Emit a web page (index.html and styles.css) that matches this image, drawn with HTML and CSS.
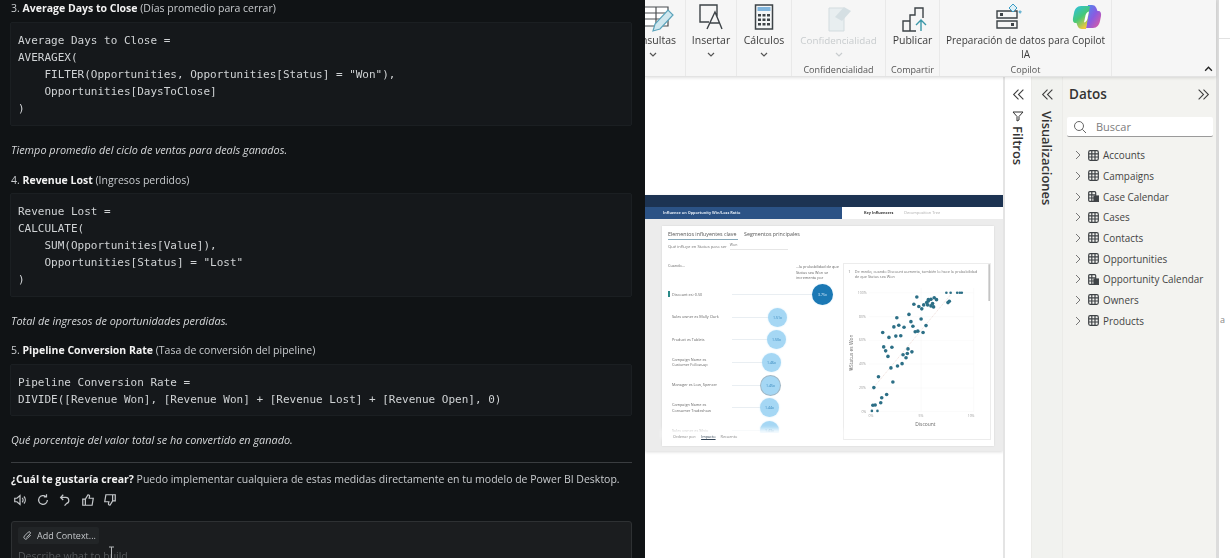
FILE: index.html
```html
<!DOCTYPE html>
<html lang="es">
<head>
<meta charset="utf-8">
<title>Power BI Desktop con chat</title>
<link rel="stylesheet" href="styles.css">
</head>
<body>
<div class="app">
  <section class="chat">
    <p class="msg"><span class="num">3.</span> <b>Average Days to Close</b> (Días promedio para cerrar)</p>
    <pre class="code">Average Days to Close =
AVERAGEX(
    FILTER(Opportunities, Opportunities[Status] = "Won"),
    Opportunities[DaysToClose]
)</pre>
    <p class="note">Tiempo promedio del ciclo de ventas para deals ganados.</p>
    <p class="msg head"><span class="num">4.</span> <b>Revenue Lost</b> (Ingresos perdidos)</p>
    <pre class="code">Revenue Lost =
CALCULATE(
    SUM(Opportunities[Value]),
    Opportunities[Status] = "Lost"
)</pre>
    <p class="note note-b">Total de ingresos de oportunidades perdidas.</p>
    <p class="msg head-b"><span class="num">5.</span> <b>Pipeline Conversion Rate</b> (Tasa de conversión del pipeline)</p>
    <pre class="code">Pipeline Conversion Rate =
DIVIDE([Revenue Won], [Revenue Won] + [Revenue Lost] + [Revenue Open], 0)</pre>
    <p class="note note-b">Qué porcentaje del valor total se ha convertido en ganado.</p>
    <hr class="rule">
    <p class="msg"><b>¿Cuál te gustaría crear?</b> Puedo implementar cualquiera de estas medidas directamente en tu modelo de Power BI Desktop.</p>
    <div class="actions">
      <svg viewBox="0 0 16 16"><path d="M2 6v4h2.500L8 13V3L4.500 6zM10.500 5.500a3.500 3.500 0 0 1 0 5M12.500 4a6 6 0 0 1 0 8"/></svg>
      <svg viewBox="0 0 16 16"><path d="M13 8a5 5 0 1 1-1.500-3.600M12 1.500v3H9"/></svg>
      <svg viewBox="0 0 16 16"><path d="M6 2L3 5l3 3M3 5h6a3.500 3.500 0 0 1 1 6.800L7.500 14.500"/></svg>
      <svg viewBox="0 0 16 16"><path d="M5 7l3-5c1.500 0 2 1 1.700 2.200L9.300 6H14l-1.300 8H5zM5 7H2v7h3"/></svg>
      <svg viewBox="0 0 16 16"><path d="M11 9l-3 5c-1.500 0-2-1-1.700-2.200L6.700 10H2l1.300-8H11zM11 9h3V2h-3"/></svg>
    </div>
    <div class="composer">
      <span class="chip">
        <svg viewBox="0 0 12 12"><path d="M9.500 5.500L5.600 9.400a2 2 0 0 1-2.900-2.900l4.200-4.200a1.300 1.300 0 0 1 1.900 1.900L4.800 8.200"/></svg>
        Add Context...
      </span>
      <div class="placeholder">Describe what to build<svg class="ibeam" viewBox="0 0 7 16"><path d="M1 1h5M3.500 1v14M1 15h5"/></svg></div>
    </div>
  </section>

  <section class="desk">
    <div class="workspace">
      <header class="ribbon">
        <div class="group g-consultas">
          <div class="tool tool-clip">
            <svg class="ico" viewBox="0 0 41 30"><path class="grid-l" d="M-12 5h36v19H-12zM-12 11h36M-12 17h36M0 5v19M12 5v19"/><path class="pen" d="M9 29l2-7L24 8l5 5-13 14z"/></svg>
            <span class="lbl lbl-right">Consultas</span>
            <svg class="chev" viewBox="0 0 8 5"><path d="M1 1l3 3 3-3"/></svg>
          </div>
        </div>
        <div class="group g-insertar">
          <div class="tool">
            <svg class="ico" viewBox="0 0 30 30"><path class="ink" d="M21 15V3H4v17h9M11 27l8-17 7 17M14 21h10"/></svg>
            <span class="lbl">Insertar</span>
            <svg class="chev" viewBox="0 0 8 5"><path d="M1 1l3 3 3-3"/></svg>
          </div>
        </div>
        <div class="group g-calculos">
          <div class="tool">
            <svg class="ico" viewBox="0 0 30 30"><rect x="6.500" y="3" width="17" height="24" fill="#f4f6f7" stroke="#3d4347" stroke-width="1.500"/><rect x="8.500" y="5" width="13" height="4" fill="#7fb4dc"/><path d="M9 12h3v2.500H9zM13.500 12h3v2.500h-3zM18 12h3v2.500h-3zM9 16.500h3V19H9zM13.500 16.500h3V19h-3zM18 16.500h3V19h-3zM9 21h3v2.500H9zM13.500 21h3v2.500h-3zM18 21h3v2.500h-3z" fill="#3d4347"/></svg>
            <span class="lbl">Cálculos</span>
            <svg class="chev" viewBox="0 0 8 5"><path d="M1 1l3 3 3-3"/></svg>
          </div>
        </div>
        <div class="group g-conf">
          <div class="tool off">
            <svg class="ico" viewBox="0 0 30 30"><path d="M5 6h15v23H5z" fill="#e8eef0" stroke="#d3dcdf"/><path d="M11 15l9-10 7 4-9 10z" fill="#d5dfe3"/></svg>
            <span class="lbl lbl-conf">Confidencialidad</span>
            <svg class="chev" viewBox="0 0 8 5"><path d="M1 1l3 3 3-3"/></svg>
          </div>
          <span class="grp">Confidencialidad</span>
        </div>
        <div class="group g-publicar">
          <div class="tool">
            <svg class="ico" viewBox="0 0 30 30"><path class="ink" d="M5 29V19h7v10zM12 29V13h5V6h8v10M12 29h6"/><path class="arrow" d="M23 29V18M18 23l5-5 5 5"/></svg>
            <span class="lbl">Publicar</span>
          </div>
          <span class="grp">Compartir</span>
        </div>
        <div class="group g-copilot">
          <div class="tool">
            <div class="icons-pair">
              <svg class="ico" viewBox="0 0 30 30"><path class="ink" d="M4 9h20v7H4zM4 19h20v7H4z"/><path d="M7 11h3v3H7zM18 21h3v3h-3z" fill="#3d4347"/><path d="M20 2l4 4-4 4-4-4zM27 9a1 1 0 1 0 .1 0" fill="#dff0f7" stroke="#3a9cc4"/></svg>
              <svg class="ico" viewBox="0 0 30 30"><defs><linearGradient id="cpa" x1="0" y1="0" x2="1" y2="1"><stop offset="0" stop-color="#4a8ff0"/><stop offset=".5" stop-color="#8a5be0"/><stop offset="1" stop-color="#ea5a98"/></linearGradient><linearGradient id="cpb" x1="0" y1="0" x2=".6" y2="1"><stop offset="0" stop-color="#2fc0e8"/><stop offset=".55" stop-color="#45c878"/><stop offset="1" stop-color="#f4c63c"/></linearGradient></defs><path d="M16 3h4c3.500 0 4.500 3 5.500 6h1c2 0 3 2 2.500 5l-1 5c-.8 4-3 7-7 7h-7z" fill="url(#cpa)"/><path d="M14 27h-4c-3.500 0-4.500-3-5.500-6h-1c-2 0-3-2-2.500-5l1-5c.8-4 3-7 7-7h9z" fill="url(#cpb)"/><path d="M17 9.500c-2 .5-3 2-3.500 4l-1.500 7c2-.5 3-2 3.500-4z" fill="#fff"/></svg>
            </div>
            <span class="lbl lbl-wrap">Preparación de datos para Copilot<br>IA</span>
          </div>
          <span class="grp">Copilot</span>
        </div>
        <div class="group-end">
          <svg class="chev collapse" viewBox="0 0 8 5"><path d="M1 4l3-3 3 3"/></svg>
        </div>
      </header>

      <div class="below">
        <main class="canvas">
          <div class="report">
            <div class="r-top"></div>
            <div class="r-head">
              <div class="r-title">Influence on Opportunity Win/Loss Ratio</div>
              <div class="r-tabs"><b>Key Influencers</b><span>Decomposition Tree</span></div>
            </div>
            <div class="r-card">
              <div class="r-left">
                <div class="r-seg"><span class="on">Elementos influyentes clave</span><span>Segmentos principales</span></div>
                <div class="r-filter"><span>Qué influye en Status para ser</span><em>Won</em></div>
                <div class="r-cols"><span>Cuando...</span><span class="r-inc">...la probabilidad de que Status sea Won se incrementa por</span></div>
                <div class="r-rows">
                  <div class="r-row first"><span class="r-name">Discount es&gt;0.50</span><i class="r-line" style="width:80px"></i><span class="bub big">3.75x</span></div>
                  <div class="r-row"><span class="r-name">Sales owner es Molly Clark</span><i class="r-line" style="width:36px"></i><span class="bub">1.51x</span></div>
                  <div class="r-row"><span class="r-name">Product es Tablets</span><i class="r-line" style="width:35px"></i><span class="bub">1.50x</span></div>
                  <div class="r-row"><span class="r-name">Campaign Name es<br>Customer Follow-up</span><i class="r-line" style="width:30px"></i><span class="bub">1.46x</span></div>
                  <div class="r-row"><span class="r-name">Manager es Low, Spencer</span><i class="r-line" style="width:29px"></i><span class="bub ring">1.45x</span></div>
                  <div class="r-row"><span class="r-name">Campaign Name es<br>Consumer Tradeshow</span><i class="r-line" style="width:28px"></i><span class="bub">1.44x</span></div>
                  <div class="r-row"><span class="r-name">Sales owner es Silvio</span><i class="r-line" style="width:28px"></i><span class="bub">1.43x</span></div>
                </div>
                <div class="r-sort"><span>Ordenar por:</span><u>Impacto</u><span>Recuento</span></div>
              </div>
              <div class="r-right">
                <svg class="scatter" viewBox="55 218 445 532">
                  <g class="cap"><text x="68" y="244">1</text><text x="88" y="244">De media, cuando Discount aumenta, también lo hace la probabilidad</text><text x="88" y="261">de que Status sea Won</text></g>
                  <path class="gl" d="M132 305H450M132 378H450M132 450H450M132 522H450M132 595H450M132 667H450M290 290V667M450 290V667"/>
                  <path class="trend" d="M140 600L385 305"/>
                  <g class="tick"><text x="97" y="308">100%</text><text x="101" y="381">80%</text><text x="101" y="453">60%</text><text x="101" y="525">40%</text><text x="101" y="598">20%</text><text x="108" y="670">0%</text><text x="130" y="683">0%</text><text x="282" y="683">5%</text><text x="432" y="683">10%</text></g>
                  <g class="dots">
                    <circle cx="277" cy="318" r="5.500"/><circle cx="268" cy="340" r="5.500"/><circle cx="283" cy="347" r="5.500"/><circle cx="292" cy="354" r="5.500"/><circle cx="298" cy="342" r="5.500"/><circle cx="307" cy="335" r="5.500"/><circle cx="312" cy="326" r="5.500"/><circle cx="320" cy="325" r="5.500"/><circle cx="330" cy="320" r="5.500"/><circle cx="337" cy="326" r="5.500"/><circle cx="310" cy="342" r="5.500"/><circle cx="320" cy="345" r="5.500"/><circle cx="328" cy="348" r="5.500"/><circle cx="312" cy="330" r="5.500"/><circle cx="325" cy="338" r="5.500"/><circle cx="372" cy="335" r="5.500"/><circle cx="376" cy="331" r="5.500"/><circle cx="367" cy="305" r="4"/><circle cx="380" cy="305" r="4"/><circle cx="400" cy="305" r="4"/><circle cx="408" cy="305" r="4"/><circle cx="414" cy="305" r="4"/><circle cx="216" cy="381" r="5.500"/><circle cx="253" cy="371" r="5.500"/><circle cx="259" cy="393" r="5.500"/><circle cx="290" cy="385" r="5.500"/><circle cx="222" cy="404" r="5.500"/><circle cx="207" cy="409" r="5.500"/><circle cx="238" cy="410" r="5.500"/><circle cx="265" cy="407" r="5.500"/><circle cx="305" cy="405" r="5.500"/><circle cx="192" cy="441" r="5.500"/><circle cx="173" cy="426" r="5.500"/><circle cx="213" cy="437" r="5.500"/><circle cx="228" cy="436" r="5.500"/><circle cx="272" cy="424" r="5.500"/><circle cx="280" cy="422" r="5.500"/><circle cx="296" cy="426" r="5.500"/><circle cx="176" cy="470" r="5.500"/><circle cx="182" cy="482" r="5.500"/><circle cx="201" cy="471" r="5.500"/><circle cx="189" cy="499" r="5.500"/><circle cx="250" cy="476" r="5.500"/><circle cx="262" cy="485" r="5.500"/><circle cx="248" cy="490" r="5.500"/><circle cx="235" cy="494" r="5.500"/><circle cx="244" cy="503" r="5.500"/><circle cx="232" cy="521" r="5.500"/><circle cx="218" cy="528" r="5.500"/><circle cx="198" cy="534" r="5.500"/><circle cx="160" cy="561" r="5.500"/><circle cx="204" cy="577" r="5.500"/><circle cx="146" cy="594" r="5.500"/><circle cx="185" cy="615" r="5.500"/><circle cx="170" cy="625" r="5.500"/><circle cx="167" cy="640" r="5.500"/><circle cx="150" cy="647" r="5.500"/><circle cx="143" cy="648" r="5.500"/><circle cx="157" cy="665" r="4"/><circle cx="140" cy="665" r="4"/>
                  </g>
                  <text class="ax ax-x" x="303" y="710">Discount</text>
                  <text class="ax ax-y" transform="translate(81 488) rotate(-90)">%Status es Won</text>
                  <rect class="sb" x="495" y="218" width="5" height="112"/>
                </svg>
              </div>
            </div>
          </div>
        </main>

        <aside class="pane filtros">
          <svg class="dbl" viewBox="0 0 12 12"><path d="M6 1.500L1.500 6 6 10.500M10.500 1.500L6 6l4.500 4.500"/></svg>
          <svg class="funnel" viewBox="0 0 12 12"><path d="M1 2h10L7 6.500V10L5 11V6.500z"/></svg>
          <span class="vert">Filtros</span>
        </aside>
        <aside class="pane viz">
          <svg class="dbl" viewBox="0 0 12 12"><path d="M6 1.500L1.500 6 6 10.500M10.500 1.500L6 6l4.500 4.500"/></svg>
          <span class="vert vert-b">Visualizaciones</span>
        </aside>
        <aside class="datos">
          <div class="d-head"><span>Datos</span><svg class="dbl" viewBox="0 0 12 12"><path d="M1.500 1.500L6 6l-4.500 4.500M6 1.500L10.500 6 6 10.500"/></svg></div>
          <div class="search">
            <svg viewBox="0 0 14 14"><circle cx="6" cy="6" r="4.500"/><path d="M9.300 9.300L13 13"/></svg>
            <span>Buscar</span>
          </div>
          <ul class="tree">
            <li><svg class="c" viewBox="0 0 6 10"><path d="M1 1l4 4-4 4"/></svg><svg class="t" viewBox="0 0 11 11"><rect x=".7" y=".7" width="9.600" height="9.600" rx="1.500"/><path d="M.7 3.800h9.600M.7 7h9.600M3.800 .7v9.600M7 .7v9.600"/></svg>Accounts</li>
            <li><svg class="c" viewBox="0 0 6 10"><path d="M1 1l4 4-4 4"/></svg><svg class="t" viewBox="0 0 11 11"><rect x=".7" y=".7" width="9.600" height="9.600" rx="1.500"/><path d="M.7 3.800h9.600M.7 7h9.600M3.800 .7v9.600M7 .7v9.600"/></svg>Campaigns</li>
            <li><svg class="c" viewBox="0 0 6 10"><path d="M1 1l4 4-4 4"/></svg><svg class="t" viewBox="0 0 11 11"><rect x=".7" y=".7" width="7" height="9.600" rx="1"/><path d="M.7 3.800h7M.7 7h7M3.800 .7v9.600"/><rect class="fill" x="6" y="5" width="4.800" height="5.800"/></svg>Case Calendar</li>
            <li><svg class="c" viewBox="0 0 6 10"><path d="M1 1l4 4-4 4"/></svg><svg class="t" viewBox="0 0 11 11"><rect x=".7" y=".7" width="9.600" height="9.600" rx="1.500"/><path d="M.7 3.800h9.600M.7 7h9.600M3.800 .7v9.600M7 .7v9.600"/></svg>Cases</li>
            <li><svg class="c" viewBox="0 0 6 10"><path d="M1 1l4 4-4 4"/></svg><svg class="t" viewBox="0 0 11 11"><rect x=".7" y=".7" width="9.600" height="9.600" rx="1.500"/><path d="M.7 3.800h9.600M.7 7h9.600M3.800 .7v9.600M7 .7v9.600"/></svg>Contacts</li>
            <li><svg class="c" viewBox="0 0 6 10"><path d="M1 1l4 4-4 4"/></svg><svg class="t" viewBox="0 0 11 11"><rect x=".7" y=".7" width="9.600" height="9.600" rx="1.500"/><path d="M.7 3.800h9.600M.7 7h9.600M3.800 .7v9.600M7 .7v9.600"/></svg>Opportunities</li>
            <li><svg class="c" viewBox="0 0 6 10"><path d="M1 1l4 4-4 4"/></svg><svg class="t" viewBox="0 0 11 11"><rect x=".7" y=".7" width="7" height="9.600" rx="1"/><path d="M.7 3.800h7M.7 7h7M3.800 .7v9.600"/><rect class="fill" x="6" y="5" width="4.800" height="5.800"/></svg>Opportunity Calendar</li>
            <li><svg class="c" viewBox="0 0 6 10"><path d="M1 1l4 4-4 4"/></svg><svg class="t" viewBox="0 0 11 11"><rect x=".7" y=".7" width="9.600" height="9.600" rx="1.500"/><path d="M.7 3.800h9.600M.7 7h9.600M3.800 .7v9.600M7 .7v9.600"/></svg>Owners</li>
            <li><svg class="c" viewBox="0 0 6 10"><path d="M1 1l4 4-4 4"/></svg><svg class="t" viewBox="0 0 11 11"><rect x=".7" y=".7" width="9.600" height="9.600" rx="1.500"/><path d="M.7 3.800h9.600M.7 7h9.600M3.800 .7v9.600M7 .7v9.600"/></svg>Products</li>
          </ul>
        </aside>
      </div>
    </div>
    <div class="edge"><div class="edge-top"></div><span class="edge-a">a</span></div>
  </section>
</div>
</body>
</html>
```

FILE: styles.css
```css
* { box-sizing: border-box; }
html, body { margin: 0; height: 100%; overflow: hidden; background: #fff; }
body { font-family: "Open Sans", "Noto Sans", sans-serif; }
.app { display: flex; width: 1230px; height: 558px; overflow: hidden; }

/* Chat panel */
.chat { width: 645px; flex: none; height: 558px; overflow: hidden; background: #101315; color: #c9cccf; padding: 0 13px 0 11px; font-size: 10.5px; filter: blur(.4px); }
.msg { margin: 0; height: 16px; line-height: 16px; white-space: nowrap; }
.msg b { color: #f2f2f2; font-weight: 700; }
.num { color: #c9cccf; }
.code { margin: 6px 0 0 -1px; padding: 8.600px 7px 7.400px 7px; background: #15181b; border: 1px solid #1b1f22; border-radius: 2px; font-family: "DejaVu Sans Mono", "Liberation Mono", monospace; font-size: 11px; line-height: 17.200px; color: #d0d3d5; }
.note { margin: 16px 0 0; height: 16px; line-height: 16px; font-size: 10.900px; font-style: italic; color: #d5d7d9; white-space: nowrap; }
.note-b { margin-top: 16px; }
.head { margin-top: 14px; }
.head + .code { margin-top: 5px; }
.head-b { margin-top: 13px; }
.rule { margin: 14px 0 0 0; height: 1px; border: 0; background: #3a3d40; }
.rule + .msg { margin-top: 8px; }
.actions { display: flex; gap: 8.500px; margin-top: 5px; height: 16px; align-items: center; padding-left: 2px; }
.actions svg { width: 14px; height: 14px; fill: none; stroke: #c4c7ca; stroke-width: 1.400; }
.composer { margin-top: 13px; height: 60px; background: #1b1d1f; border: 1px solid #2e3133; border-radius: 3px 3px 0 0; padding: 5px 6px; }
.chip { display: inline-flex; align-items: center; gap: 4px; height: 17px; padding: 0 3px 0 4px; background: #222527; border-radius: 2px; font-size: 9px; color: #c4c7ca; }
.chip svg { width: 11px; height: 11px; fill: none; stroke: #c4c7ca; }
.placeholder { position: relative; margin-top: 5px; font-size: 10.500px; line-height: 14px; color: #55585b; white-space: nowrap; }
.ibeam { position: absolute; left: 90px; top: -3px; width: 7px; height: 16px; fill: none; stroke: #b5b8ba; }

/* Desktop side */
.desk { flex: 1; display: flex; min-width: 0; }
.workspace { width: 571px; flex: none; display: flex; flex-direction: column; filter: blur(.4px); }
.edge { flex: 1; border-left: 3px solid #dcdcdc; background: #fff; color: #888; font-size: 9px; }
.edge-top { height: 39px; border-bottom: 1px solid #e2e2e2; }
.edge-a { display: block; margin-top: 274px; padding-left: 1px; }

/* Ribbon */
.ribbon { height: 77px; flex: none; display: flex; background: #f6f6f6; border-bottom: 1px solid #e3e3e3; box-shadow: 0 1px 3px rgba(0,0,0,.12); position: relative; z-index: 1; overflow: hidden; }
.group { display: flex; flex-direction: column; align-items: center; border-right: 1px solid #e9e9e9; height: 76px; }
.g-consultas { width: 41px; }
.g-insertar { width: 51px; }
.g-calculos { width: 55px; }
.g-conf { width: 94px; }
.g-publicar { width: 54px; }
.g-copilot { width: 172px; }
.group-end { flex: 1; display: flex; justify-content: flex-end; align-items: flex-end; padding: 0 3px 4px 0; }
.tool { flex: 1; display: flex; flex-direction: column; align-items: center; width: 100%; color: #3b3b3b; }
.tool-clip { align-items: flex-end; padding-right: 9px; }
.ico { width: 30px; height: 30px; flex: none; margin-top: 2px; }
.tool-clip .ico { width: 41px; margin-right: -9px; }
.lbl { margin-top: 1px; height: 15px; line-height: 15px; font-size: 10.500px; white-space: nowrap; }
.lbl-conf { font-size: 9.800px; }
.lbl-wrap { height: auto; width: 170px; white-space: nowrap; text-align: center; line-height: 14px; font-size: 10px; }
.chev { width: 8px; height: 5px; margin-top: 4px; fill: none; stroke: #555; stroke-width: 1.200; flex: none; }
.tool-clip .chev { margin-right: 19px; }
.collapse { stroke: #222; width: 9px; height: 6px; }
.off { color: #c8ccce; }
.off .chev { stroke: #c8ccce; }
.grp { height: 12px; line-height: 12px; font-size: 9px; color: #555; flex: none; white-space: nowrap; }
.icons-pair { display: flex; gap: 49px; margin-left: 43px; }
.grid-l { fill: #fff; stroke: #4b4f52; stroke-width: 1.200; }
.pen { fill: #cfe7ef; stroke: #5aa3bb; stroke-width: 1.200; }
.ink { fill: none; stroke: #3d4347; stroke-width: 1.400; }
.arrow { fill: none; stroke: #3a97a8; stroke-width: 1.400; }

/* Panes row */
.below { flex: 1; display: flex; min-height: 0; }
.canvas { width: 360px; flex: none; background: #fff; padding-top: 118px; overflow: hidden; border-right: 2px solid #e4e4e4; }
.pane { flex: none; display: flex; flex-direction: column; align-items: center; }
.filtros { width: 27px; background: #fff; padding-top: 11px; border-right: 1px solid #ebebe8; }
.viz { width: 31px; background: #f1f2ef; padding-top: 11px; border-right: 1px solid #ebebe8; }
.dbl { width: 13px; height: 13px; fill: none; stroke: #3f3f3f; stroke-width: 1; flex: none; }
.funnel { width: 12px; height: 12px; fill: none; stroke: #333; margin-top: 9px; flex: none; }
.vert { writing-mode: vertical-rl; font-size: 13px; font-weight: 600; color: #333; margin-top: 4px; line-height: 16px; }
.vert-b { margin-top: 10px; font-size: 12.900px; }
.datos { flex: 1; background: #f3f3f0; padding: 9px 3px 0 4px; min-width: 0; }
.d-head { display: flex; justify-content: space-between; align-items: center; height: 16px; font-size: 13.500px; font-weight: 600; color: #333; padding: 0 3px 0 2px; }
.search { display: flex; align-items: center; gap: 9px; height: 20px; margin-top: 15px; padding-left: 6px; background: #fff; border-bottom: 1px solid #9a9a9a; border-radius: 2px; font-size: 11px; color: #7d7d7d; }
.search svg { width: 14px; height: 14px; fill: none; stroke: #666; }
.tree { list-style: none; margin: 8px 0 0; padding: 0 0 0 8px; }
.tree li { display: flex; align-items: center; height: 20.670px; font-size: 9.900px; color: #444; white-space: nowrap; }
.tree .c { width: 6px; height: 10px; margin: 0 7px 0 0; fill: none; stroke: #777; flex: none; }
.tree .t { width: 11px; height: 11px; margin-right: 4px; fill: none; stroke: #3f4346; stroke-width: 1.200; flex: none; }
.tree .fill { fill: #3f4346; }

/* Embedded report */
.report { width: 358px; height: 256px; background: #ececec; box-shadow: 0 1px 3px rgba(0,0,0,.15); filter: blur(.3px); }
.r-top { height: 12px; background: #1c3352; }
.r-head { height: 12px; display: flex; background: #fff; }
.r-title { width: 197px; background: #2b5285; color: #dfe8f3; font-size: 3.800px; font-weight: 700; padding-left: 18px; line-height: 12px; white-space: nowrap; }
.r-tabs { display: flex; gap: 11px; padding-left: 22px; font-size: 3.800px; line-height: 12px; color: #aaa; white-space: nowrap; }
.r-tabs b { color: #333; }
.r-card { margin: 7px 9px 0 17px; height: 220px; display: flex; background: #fff; box-shadow: 0 0 2px rgba(0,0,0,.1); }
.r-left { width: 181px; flex: none; display: flex; flex-direction: column; font-size: 4px; color: #666; }
.r-seg { display: flex; gap: 6px; height: 15px; padding: 4px 0 0 6px; font-size: 5.300px; line-height: 9px; color: #555; }
.r-seg .on { border-bottom: 1px solid #8ab; height: 10px; width: 70px; white-space: nowrap; }
.r-filter { display: flex; gap: 3px; height: 10px; padding-left: 6px; margin-top: 1px; line-height: 10px; font-size: 4.200px; color: #777; }
.r-filter em { flex: 0 0 58px; font-style: normal; border-bottom: 1px solid #e6e6e6; height: 8px; line-height: 6px; font-size: 3.500px; }
.r-cols { display: flex; justify-content: space-between; height: 31px; padding: 11px 0 0 6px; font-size: 3.800px; line-height: 5.500px; }
.r-inc { width: 47px; margin-top: 1px; }
.r-rows { height: 153px; overflow: hidden; }
.r-row { display: flex; align-items: center; height: 22.700px; padding-left: 10px; position: relative; }
.r-row.first::before { content: ""; position: absolute; left: 6px; top: 8px; width: 1.500px; height: 6px; background: #2a8a88; }
.r-name { width: 60px; flex: none; font-size: 3.800px; line-height: 5.500px; color: #666; }
.r-line { height: 1px; background: #e9eef2; flex: none; }
.bub { width: 19px; height: 19px; border-radius: 50%; background: #a5d7f4; color: #2b7fb8; font-size: 3.500px; display: flex; align-items: center; justify-content: center; flex: none; box-shadow: 0 0 2px #cfeafa; }
.big { width: 21px; height: 21px; background: #1b78b4; color: #dcefff; }
.ring { box-shadow: 0 0 0 1px #9fb7c6; }
.r-sort { display: flex; gap: 5px; height: 10px; padding-left: 11px; margin-top: -3px; background: #fff; box-shadow: 0 -4px 4px rgba(255,255,255,.9); font-size: 3.800px; line-height: 8px; color: #888; position: relative; }
.r-sort u { color: #345; }
.r-right { flex: 1; padding: 37px 3px 5px 0; min-width: 0; }
.scatter { display: block; width: 148px; height: 177px; border: 1px solid #ececec; }
.cap, .tick { font-family: "Open Sans", sans-serif; font-size: 11.500px; fill: #777; }
.tick { fill: #999; font-size: 10.500px; }
.gl { stroke: #f3f3f3; fill: none; }
.trend { stroke: #dcb9ae; stroke-dasharray: 3 3; fill: none; stroke-width: 1.500; }
.dots circle { fill: #2c6f86; }
.ax { font-family: "Open Sans", sans-serif; font-size: 15px; fill: #666; text-anchor: middle; }
.sb { fill: #c4c4c4; }
```
